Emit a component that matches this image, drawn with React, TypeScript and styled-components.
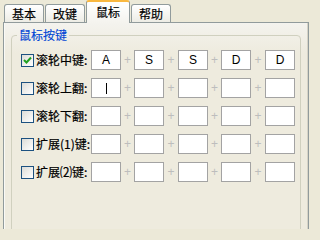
import React from "react";
import styled, { createGlobalStyle } from "styled-components";

const Global = createGlobalStyle`
  html, body { margin: 0; padding: 0; background: #ECE9D8; overflow: hidden; }
  body {
    width: 315px; height: 229px;
    font-family: "Noto Sans CJK SC", "Liberation Sans", sans-serif;
    font-size: 12px; color: #000;
  }
`;

const Window = styled.div`
  width: 315px;
  height: 229px;
  display: flex;
  flex-direction: column;
  overflow: hidden;
`;

const TabStrip = styled.div`
  display: flex;
  align-items: flex-end;
  height: 22px;
  flex: none;
  padding-left: 4px;
  position: relative;
  z-index: 1;
`;

const Tab = styled.div<{ $active?: boolean }>`
  box-sizing: border-box;
  height: ${(p) => (p.$active ? 23 : 18)}px;
  margin-bottom: ${(p) => (p.$active ? -1 : 0)}px;
  margin-right: 1px;
  padding: 0 ${(p) => (p.$active ? 9 : 7)}px ${(p) => (p.$active ? 2 : 0)}px;
  border: 1px solid #919B9C;
  border-top: ${(p) => (p.$active ? "2px solid #F9B840" : "1px solid #919B9C")};
  border-bottom: none;
  border-radius: 3px 3px 0 0;
  background: ${(p) =>
    p.$active ? "linear-gradient(#FFFFFF, #F4F3EE)" : "linear-gradient(#FFFFFF, #EDECE5)"};
  display: flex;
  align-items: center;
  justify-content: center;
  line-height: 14px;
  white-space: nowrap;
  -webkit-text-stroke: 0.2px #000;
`;

const Panel = styled.div`
  box-sizing: border-box;
  margin-left: 3px;
  width: 306px;
  flex: 1;
  min-height: 0;
  overflow: hidden;
  border: 1px solid #919B9C;
  border-bottom: none;
  box-shadow: inset 1px 0 #FAFAF6, inset -1px 0 #D6D3C6;
  background: linear-gradient(#F4F3EE, #EEEBDE 30px);
  padding: 5px 7px 0 7px;
`;

const Group = styled.fieldset`
  margin: 0;
  padding: 8px 0 0 0;
  border: 1px solid #D0D0BF;
  border-radius: 4px;
  min-width: 0;
  height: 300px;
  box-sizing: border-box;
`;

const Legend = styled.legend`
  margin-left: 5px;
  padding: 0 2px;
  color: #0046D5;
  font-size: 12px;
  line-height: 14px;
  -webkit-text-stroke: 0.15px #0046D5;
`;

const Rows = styled.div`
  display: flex;
  flex-direction: column;
  gap: 8px;
  padding-left: 9px;
`;

const Row = styled.div`
  display: flex;
  align-items: center;
  height: 20px;
`;

const CheckBox = styled.span`
  box-sizing: border-box;
  width: 13px;
  height: 13px;
  border: 1px solid #1C5180;
  background: linear-gradient(135deg, #DCDCD7, #FFFFFF);
  display: flex;
  align-items: center;
  justify-content: center;
`;

const Label = styled.span`
  width: 55px;
  margin-left: 2px;
  font-size: 12px;
  line-height: 14px;
  white-space: nowrap;
  -webkit-text-stroke: 0.2px #000;
`;

const KeyBox = styled.div`
  box-sizing: border-box;
  width: 30px;
  height: 20px;
  border: 1px solid #A3A3A3;
  background: #FFFFFF;
  display: flex;
  align-items: center;
  justify-content: center;
  font-family: "Liberation Sans", Arial, sans-serif;
  font-size: 12px;
`;

const Caret = styled.span`
  width: 1px;
  height: 11px;
  background: #000;
`;

const Plus = styled.span<{ $w: number }>`
  width: ${(p) => p.$w}px;
  text-align: center;
  color: #BDBDBD;
  font-family: "Liberation Sans", Arial, sans-serif;
  font-size: 12px;
  line-height: 20px;
`;

const Check = () => (
  <svg width="9" height="9" viewBox="0 0 9 9">
    <path d="M1 4 L3.5 6.5 L8 1.5" fill="none" stroke="#21A121" strokeWidth="2" />
  </svg>
);

type RowData = { label: string; checked?: boolean; keys: string[]; caret?: number };

const empty = ["", "", "", "", ""];

const rows: RowData[] = [
  { label: "滚轮中键:", checked: true, keys: ["A", "S", "S", "D", "D"] },
  { label: "滚轮上翻:", keys: empty, caret: 0 },
  { label: "滚轮下翻:", keys: empty },
  { label: "扩展(1)键:", keys: empty },
  { label: "扩展⑵键:", keys: empty },
];

const seps = [13, 14, 13, 14];

export default function App() {
  return (
    <Window>
      <Global />
      <TabStrip>
        <Tab>基本</Tab>
        <Tab>改键</Tab>
        <Tab $active>鼠标</Tab>
        <Tab>帮助</Tab>
      </TabStrip>
      <Panel>
        <Group>
          <Legend>鼠标按键</Legend>
          <Rows>
            {rows.map((r, i) => (
              <Row key={i}>
                <CheckBox>{r.checked && <Check />}</CheckBox>
                <Label>{r.label}</Label>
                {r.keys.map((k, j) => (
                  <React.Fragment key={j}>
                    {j > 0 && <Plus $w={seps[j - 1]}>+</Plus>}
                    <KeyBox>{r.caret === j ? <Caret /> : k}</KeyBox>
                  </React.Fragment>
                ))}
              </Row>
            ))}
          </Rows>
        </Group>
      </Panel>
    </Window>
  );
}
